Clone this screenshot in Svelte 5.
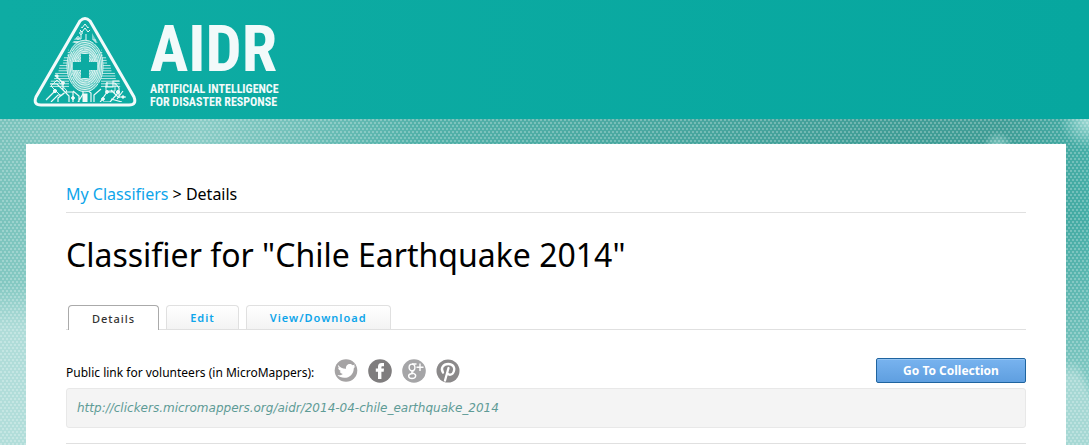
<script>
  const url = 'http://clickers.micromappers.org/aidr/2014-04-chile_earthquake_2014'
  const tabs = ['Details', 'Edit', 'View/Download']
  let active = $state('Details')

  // fingerprint rings around the cross
  const rings = [6, 8.2, 10.4, 12.6, 14.8, 17, 19.2, 21.4, 23.6, 25.8]
  // circuit traces running out from the fingerprint
  const traces = Array.from({ length: 15 }, (_, i) => {
    const y = 34 + i * 2.6
    return { y, half: (y - 4) * 0.56 - (i % 3) }
  })
</script>

<header class="top">
  <a class="logo" href="#home" aria-label="AIDR home">
    <svg class="mark" viewBox="0 0 104 92" aria-hidden="true">
      <defs>
        <clipPath id="inside"><path d="M52 5 L99 86 H5 Z" /></clipPath>
      </defs>
      <g clip-path="url(#inside)" fill="none" stroke="#eef9f8" stroke-width="1">
        {#each traces as t}
          <path d="M{52 - t.half} {t.y} H36 M68 {t.y} H{52 + t.half}" opacity=".8" />
        {/each}
        <path d="M46 8 l3 4 3-4 3 4 3-4 M45 12 l4 4 3-4 3 4 4-4 M48 23 v-5 M48 23 H41 M53 18 v8 h-12 M60 12 v12 h5 M62 17 v9 h6 M38 26 h8" />
        <circle cx="48" cy="17" r="1.3" />
        <circle cx="45" cy="22" r="1.3" />
        <path d="M22 59 l8 8 v7 l6 6 v7 M17 68 h7 l8 8 h8 v11 M13 84 l9-9 M18 86 l7-7 h4 M25 86 v-4 l6-5 M40 75 l6 5 v8 M45 86 l5-8 v-5 M58 88 V77 l-4-3 M61 88 V79 l7-6 M66 88 l8-12 h8 M70 86 h7 l8-9 M78 74 l7 7 h8 M82 67 l4 5 v10 M90 75 l-6 8 M72 71 h8 v-6 h7 M74 66 v5 M78 83 l11 3" stroke-width="1.2" />
        <path d="M18 70 l6-6 10 11-6 5z M73 67 h9 v8 h-9z" opacity=".9" />
        <g fill="#eef9f8">
          <circle cx="22" cy="75" r="1.6" /><circle cx="30" cy="67" r="1.4" />
          <circle cx="24" cy="60" r="1.2" /><circle cx="74" cy="76" r="1.4" />
          <circle cx="85" cy="76" r="1.6" /><circle cx="90" cy="81" r="1.2" />
          <circle cx="40" cy="82" r="1.4" /><circle cx="70" cy="83" r="1.4" />
          <rect x="50" y="78" width="4" height="10" />
        </g>
        <ellipse cx="52" cy="50" rx="18" ry="26" fill="#5cc8c1" stroke="none" />
        {#each rings as r, i}
          <ellipse cx="52" cy="50" rx={r * 0.7} ry={r} stroke-width="1" stroke-dasharray="{r + 5} 1" stroke-dashoffset={i * 5} opacity=".85" />
        {/each}
        <ellipse cx="52" cy="50" rx="9" ry="15" stroke-width="9" opacity=".3" />
      </g>
      <path d="M48 38 h8 v8 h8 v8 h-8 v8 h-8 v-8 h-8 v-8 h8z" fill="#0caba2" />
      <path d="M47 5 Q52 0 57 5 L101 81 Q104 89 96 89 H8 Q0 89 3 81 Z" fill="none" stroke="#f2fafa" stroke-width="3" />
    </svg>
    <span class="words">
      <span class="name">AIDR</span>
      <span class="motto">ARTIFICIAL INTELLIGENCE</span>
      <span class="motto">FOR DISASTER RESPONSE</span>
    </span>
  </a>
</header>

<div class="backdrop">
  <main class="page">
    <nav class="crumbs" aria-label="Breadcrumb">
      <a href="#classifiers">My Classifiers</a> &gt; Details
    </nav>

    <h1>Classifier for "Chile Earthquake 2014"</h1>

    <div class="tabs" role="tablist">
      {#each tabs as tab}
        <button
          class="tab"
          class:active={active === tab}
          role="tab"
          aria-selected={active === tab}
          onclick={() => (active = tab)}>{tab}</button>
      {/each}
    </div>

    <div class="share">
      <span class="label">Public link for volunteers (in MicroMappers):</span>
      <div class="social">
        <a href="#twitter" aria-label="Twitter">
          <svg viewBox="0 0 24 24"><circle cx="12" cy="11.500" r="11.300" fill="#a5a3a4" /><path fill="#fff" d="M4 6 C6 8.500 9 10 12 9.800 C11.500 6.500 14 4.800 16 5 C17.300 5 18 5.700 18.600 6.300 L21 5.500 L19.800 7.600 L21.500 7.300 L19.800 9.200 C19.700 15 15.500 19 10.200 18.800 C7.500 18.800 5 17.700 3.500 16 C5.800 16.500 7.500 15.800 8.800 14.900 C7 14.600 6 13.500 5.700 12.300 L7.300 12.200 C5.300 11.500 4.200 10.200 4.200 8.500 L5.500 8.900 C4.300 8 3.700 7 4 6Z" /></svg>
        </a>
        <a href="#facebook" aria-label="Facebook">
          <svg viewBox="0 0 24 24"><circle cx="12" cy="12" r="11.800" fill="#7f7d7e" /><path fill="#fff" d="M10 20 V12.800 H7.800 V9.500 H10 V7.500 C10 5 11.500 4 13.500 4 H16 V7.300 H14.500 C13.600 7.300 13.400 7.700 13.400 8.500 V9.500 H16 L15.700 12.800 H13.400 V20Z" /></svg>
        </a>
        <a href="#google" aria-label="Google Plus">
          <svg viewBox="0 0 24 24"><circle cx="12" cy="12" r="11.800" fill="#a5a5a7" /><g fill="none" stroke="#fff" stroke-width="1.400"><ellipse cx="10" cy="8.500" rx="2.900" ry="3.400" /><path d="M10 5 H14.500 M12 11.500 C9 12.500 9 13.500 11.500 14.300 C15 15.500 14 19.500 10 19.500 C6 19.500 5.500 15.500 9 14.800 L11 14.500 M18 4.500 V12 M14.500 8.200 H21.500" /></g></svg>
        </a>
        <a href="#pinterest" aria-label="Pinterest">
          <svg viewBox="0 0 24 24"><circle cx="12" cy="12" r="11.500" fill="#8b898a" /><path fill="none" stroke="#fff" stroke-width="2.300" stroke-linecap="round" d="M7 13.500 C4 9 7.500 5 12.200 5 C17 5 19.300 8.500 17.800 12.500 C16.500 16.500 12.500 16.500 11.300 14 M12.500 9 L9 21.500" /></svg>
        </a>
      </div>
      <button class="go">Go To Collection</button>
    </div>

    <div class="link">{url}</div>
    <hr />
  </main>
</div>

<style>
  :global(body) {
    background: #8fcdc7;
    font-family: 'Noto Sans', 'Open Sans', sans-serif;
    color: #000;
  }

  a {
    color: #0ea5ea;
    text-decoration: none;
  }

  .top {
    height: 119px;
    box-sizing: border-box;
    padding: 16px 33px 0;
    background: linear-gradient(90deg, #0eaca3, #07a79f);
  }

  .logo {
    display: inline-flex;
    gap: 13px;
    color: #f2fafa;
  }

  .mark {
    width: 104px;
    height: 92px;
  }

  .words {
    display: flex;
    flex-direction: column;
    font-family: 'Roboto Condensed', Roboto, sans-serif;
    font-weight: bold;
    white-space: nowrap;
  }

  .name {
    font-size: 64px;
    line-height: 67px;
  }

  .motto {
    font-size: 12px;
    line-height: 13px;
  }

  .backdrop {
    padding: 25px 23px 0 26px;
    background:
      radial-gradient(circle at 1px 1px, rgba(255, 255, 255, 0.25) 1px, transparent 1px) 0 0 / 4px 6px,
      radial-gradient(circle at 1px 1px, rgba(255, 255, 255, 0.25) 1px, transparent 1px) 2px 3px / 4px 6px,
      radial-gradient(circle at 100% 0, #9ad6d1 4px, transparent 30px),
      radial-gradient(ellipse 18px 28px at 998px 40px, #8accc6 40%, transparent),
      radial-gradient(ellipse 28px 90px at 1071px 330px, #a6d8d4 80%, transparent),
      linear-gradient(180deg, transparent 165px, rgba(184, 224, 221, 0.8) 210px) 0 0 / 500px 100% no-repeat,
      linear-gradient(180deg, transparent 100px, rgba(160, 215, 210, 0.8) 300px),
      linear-gradient(90deg, #7ac3bc 0, #8accc6 200px, #52b1a9 420px, #409d96 900px, #409d96 1000px, #46aea7);
  }

  .page {
    padding: 40px 40px 1px;
    background: #fff;
  }

  .crumbs {
    padding-bottom: 7px;
    border-bottom: 1px solid #e0e0e0;
    font-size: 16px;
    line-height: 21px;
  }

  h1 {
    margin: 20px 0 28px;
    font-size: 32px;
    font-weight: 400;
    line-height: 44px;
  }

  .tabs {
    display: flex;
    gap: 7px;
    padding-left: 2px;
    border-bottom: 1px solid #e0e0e0;
  }

  .tab {
    height: 24px;
    padding: 0 23px;
    border: 1px solid #e0e0e0;
    border-bottom: 0;
    border-radius: 4px 4px 0 0;
    background: linear-gradient(#fff, #f3f3f3);
    color: #0ea5ea;
    font: 600 11px 'Noto Sans', sans-serif;
    letter-spacing: 1px;
  }

  .tab.active {
    height: 25px;
    margin-bottom: -1px;
    border-color: #aaa;
    background: #fff;
    color: #333;
    font-weight: 500;
  }

  .share {
    display: flex;
    align-items: center;
    margin-top: 28px;
    height: 25px;
  }

  .label {
    padding-top: 4px;
    font-size: 12px;
    white-space: nowrap;
  }

  .social {
    display: flex;
    gap: 10px;
    margin-left: 20px;
  }

  .social svg {
    display: block;
    width: 24px;
    height: 24px;
  }

  .go {
    width: 150px;
    height: 25px;
    margin-left: auto;
    border: 1px solid #1f649f;
    border-radius: 2px;
    background: linear-gradient(#78b3ef, #5f9fe0);
    box-shadow: inset 0 1px #93c4f3;
    color: #fff;
    font: bold 12px 'Noto Sans', sans-serif;
  }

  .link {
    margin-top: 5px;
    padding: 9px 10px;
    border: 1px solid #e8e8e8;
    border-radius: 3px;
    background: #f4f4f4;
    color: #5e9b96;
    font-family: 'DejaVu Sans', sans-serif;
    font-size: 12px;
    font-style: italic;
    line-height: 20px;
  }

  hr {
    margin: 15px 0 0;
    border: 0;
    border-top: 1px solid #e0e0e0;
  }
</style>
